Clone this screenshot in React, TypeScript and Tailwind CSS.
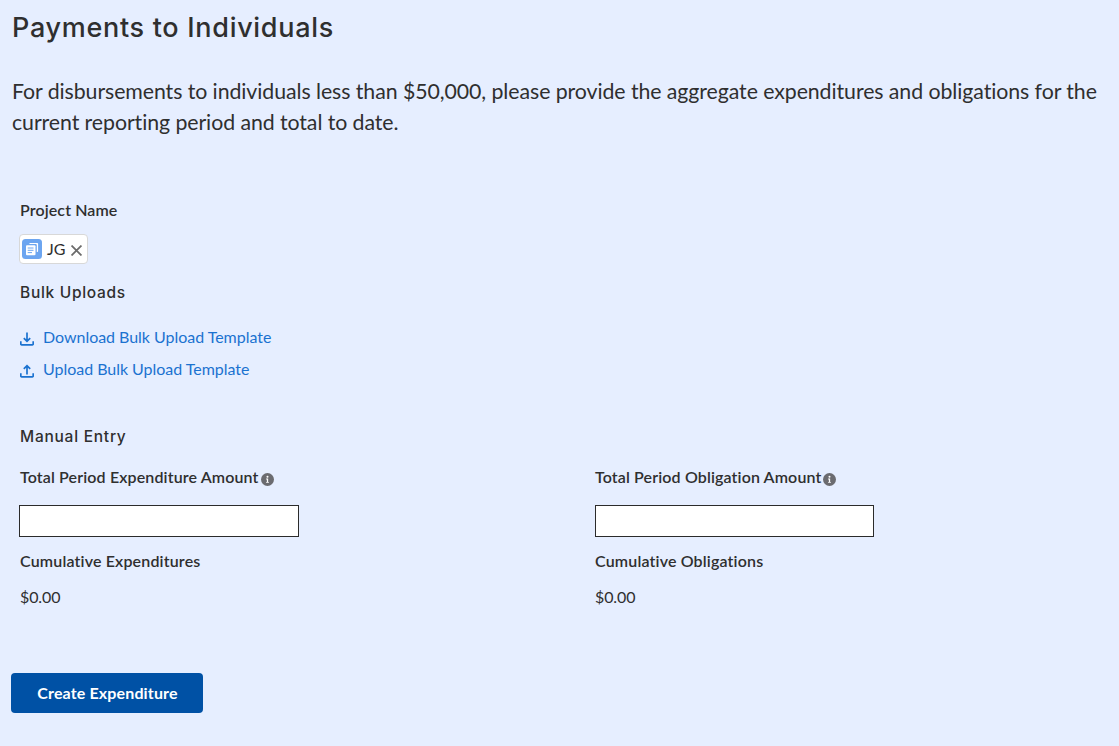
import React from "react";

function InfoIcon() {
  return (
    <svg viewBox="0 0 14 14" className="mt-2 ml-[2px] h-[13px] w-[13px] shrink-0">
      <circle cx="7" cy="7" r="7" fill="#6b6b70" />
      <circle cx="7" cy="4" r="1.1" fill="#fff" />
      <path d="M5.5 6h2.2v3.6h.8v1H5.5v-1h.8V7h-.8z" fill="#fff" />
    </svg>
  );
}

function TransferIcon({ up }: { up?: boolean }) {
  return (
    <svg viewBox="0 0 14 14" className="mt-[7px] h-[14px] w-[14px] shrink-0" fill="none" stroke="#1b72d0" strokeWidth="1.7">
      <path d="M.8 9.3v2.8c0 .5.3.8.8.8h10.8c.5 0 .8-.3.8-.8V9.3" />
      {up ? <path d="M7 10.5V2M3.8 4.9 7 1.7l3.2 3.2" /> : <path d="M7 .5v8.7M3.8 6.2 7 9.4l3.2-3.2" />}
    </svg>
  );
}

function Field({ label, total, inputClass }: { label: string; total: string; inputClass: string }) {
  return (
    <div className="w-[280px]">
      <div className="flex h-6 font-semibold leading-6 tracking-[0.13px] whitespace-nowrap">
        <span>{label}</span>
        <InfoIcon />
      </div>
      <input aria-label={label} className={`mt-4 block h-8 border border-[#2b2b2b] bg-white px-2 outline-none ${inputClass}`} />
      <div className="mt-3 h-6 font-semibold leading-6 tracking-[0.16px]">{total}</div>
      <div className="mt-3 h-6 leading-6 tracking-[-0.1px]">$0.00</div>
    </div>
  );
}

export default function App() {
  return (
    <main className="h-[746px] overflow-hidden bg-[#e6eeff] font-['Lato',sans-serif] text-base text-[#2f2f2f] [font-variant-ligatures:none]">
      <h1 className="ml-3 pt-2.5 font-['Inter',sans-serif] text-[27px] leading-9 font-[450] tracking-[0.7px] whitespace-nowrap">Payments to Individuals</h1>
      <p className="mt-[30px] ml-3 text-[21.3px] leading-[31px] tracking-[-0.07px] whitespace-nowrap">
        For disbursements to individuals less than $50,000, please provide the aggregate expenditures and obligations for the
        <br />
        current reporting period and total to date.
      </p>
      <section className="mt-[60px] ml-5">
        <div className="h-6 font-semibold leading-6 tracking-[0.1px]">Project Name</div>
        <div className="mt-3 -ml-px flex h-[30px] w-[69px] items-center rounded border border-[#d8d8d8] bg-white pl-0.5">
          <svg viewBox="0 0 20 20" className="h-5 w-5 shrink-0">
            <rect width="20" height="20" rx="3.5" fill="#6ca5f0" />
            <path d="M7.3 5V4.7c0-.5.3-.8.8-.8h7.2c.5 0 .8.3.8.8v7.6c0 .5-.3.8-.8.8h-.5V6.2c0-.7-.5-1.2-1.2-1.2z" fill="#fff" />
            <rect x="4" y="6.2" width="9.5" height="10" rx="1" fill="#fff" />
            <path d="M5.7 9h5.8M5.7 11.3h5.8M5.7 13.6h4.3" stroke="#6ca5f0" strokeWidth="1" />
          </svg>
          <span className="ml-[5px] w-[19px]">JG</span>
          <svg viewBox="0 0 10 10" className="mt-0.5 ml-[5px] h-[11px] w-[11px] shrink-0" stroke="#6b6b6b" strokeWidth="1.6">
            <path d="M.5.5l9 9M9.5.5l-9 9" />
          </svg>
        </div>
        <h2 className="mt-[17px] h-6 font-['Inter',sans-serif] text-[15.5px] font-[450] leading-6 tracking-[0.7px]">Bulk Uploads</h2>
        <div className="mt-5 flex h-6 gap-[9px] leading-6 tracking-[-0.03px] text-[#1b72d0]"><TransferIcon /><a>Download Bulk Upload Template</a></div>
        <div className="mt-2 flex h-6 gap-[9px] leading-6 tracking-[-0.03px] text-[#1b72d0]"><TransferIcon up /><a>Upload Bulk Upload Template</a></div>
        <h2 className="mt-11 h-6 font-['Inter',sans-serif] text-[15.5px] font-[450] leading-6 tracking-[0.75px]">Manual Entry</h2>
        <div className="mt-4 grid grid-cols-[575px_1fr]">
          <Field label="Total Period Expenditure Amount" total="Cumulative Expenditures" inputClass="-ml-px w-[280px]" />
          <Field label="Total Period Obligation Amount" total="Cumulative Obligations" inputClass="w-[279px]" />
        </div>
      </section>
      <button className="mt-[64px] ml-[11px] block h-10 w-48 rounded bg-[#0051a5] pl-px text-base font-bold tracking-[0.14px] text-white">Create Expenditure</button>
    </main>
  );
}
